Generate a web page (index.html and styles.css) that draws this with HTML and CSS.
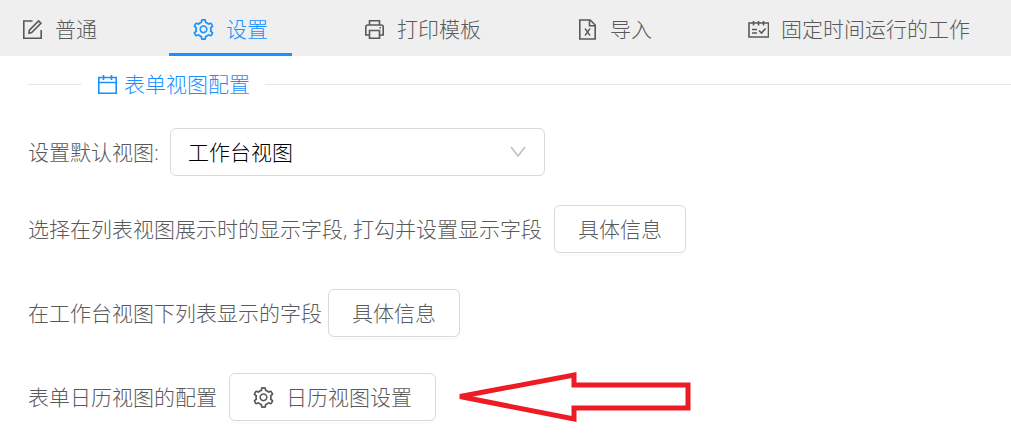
FILE: index.html
```html
<!DOCTYPE html>
<html lang="zh-CN">
<head>
<meta charset="UTF-8">
<meta name="viewport" content="width=device-width, initial-scale=1.0">
<title>设置</title>
<link rel="stylesheet" href="styles.css">
</head>
<body>

<!-- Shared icons -->
<svg class="icon-defs" aria-hidden="true">
    <symbol id="icon-setting" viewBox="64 64 896 896">
        <path fill="currentColor" d="M924.8 625.7l-65.5-56c3.1-19 4.7-38.4 4.7-57.8s-1.6-38.8-4.7-57.8l65.5-56a32.03 32.03 0 0 0 9.3-35.2l-.9-2.6a443.74 443.74 0 0 0-79.7-137.9l-1.8-2.1a32.12 32.12 0 0 0-35.1-9.5l-81.3 28.9c-30-24.6-63.5-44-99.7-57.6l-15.7-85a32.05 32.05 0 0 0-25.8-25.7l-2.7-.5c-52.1-9.4-106.9-9.4-159 0l-2.7.5a32.05 32.05 0 0 0-25.8 25.7l-15.8 85.4a351.86 351.86 0 0 0-99 57.4l-81.9-29.1a32 32 0 0 0-35.1 9.5l-1.8 2.1a446.02 446.02 0 0 0-79.7 137.9l-.9 2.6c-4.5 12.5-.8 26.5 9.3 35.2l66.3 56.6c-3.1 18.8-4.6 38-4.6 57.1 0 19.2 1.5 38.4 4.6 57.1L99 625.5a32.03 32.03 0 0 0-9.3 35.2l.9 2.6c18.1 50.4 44.9 96.9 79.7 137.9l1.8 2.1a32.12 32.12 0 0 0 35.1 9.5l81.9-29.1c29.8 24.5 63.1 43.9 99 57.4l15.8 85.4a32.05 32.05 0 0 0 25.8 25.7l2.7.5a449.4 449.4 0 0 0 159 0l2.7-.5a32.05 32.05 0 0 0 25.8-25.7l15.7-85a350 350 0 0 0 99.7-57.6l81.3 28.9a32 32 0 0 0 35.1-9.5l1.8-2.1c34.8-41.1 61.6-87.5 79.7-137.9l.9-2.6c4.5-12.3.8-26.3-9.3-35zM788.3 465.9c2.5 15.1 3.8 30.6 3.8 46.1s-1.3 31-3.8 46.1l-6.6 40.1 74.7 63.9a370.03 370.03 0 0 1-42.6 73.6L721 702.8l-31.4 25.8c-23.9 19.6-50.5 35-79.3 45.8l-38.1 14.3-17.9 97a377.5 377.5 0 0 1-85 0l-17.9-97.2-37.8-14.5c-28.5-10.8-55-26.2-78.7-45.7l-31.4-25.9-93.4 33.2c-17-22.9-31.2-47.6-42.6-73.6l75.5-64.5-6.5-40c-2.4-14.9-3.7-30.3-3.7-45.5 0-15.3 1.2-30.6 3.7-45.5l6.5-40-75.5-64.5c11.3-26.1 25.6-50.7 42.6-73.6l93.4 33.2 31.4-25.9c23.7-19.5 50.2-34.9 78.7-45.7l37.9-14.3 17.9-97.2c28.1-3.2 56.8-3.2 85 0l17.9 97 38.1 14.3c28.7 10.8 55.4 26.2 79.3 45.8l31.4 25.8 92.8-32.9c17 22.9 31.2 47.6 42.6 73.6L781.8 426l6.5 39.9z"/>
        <path fill="currentColor" d="M512 326c-97.2 0-176 78.8-176 176s78.8 176 176 176 176-78.8 176-176-78.8-176-176-176zm79.2 255.2A111.6 111.6 0 0 1 512 614c-29.9 0-58-11.7-79.2-32.8A111.6 111.6 0 0 1 400 502c0-29.9 11.7-58 32.8-79.2C454 401.6 482.1 390 512 390c29.9 0 58 11.6 79.2 32.8A111.6 111.6 0 0 1 624 502c0 29.9-11.7 58-32.8 79.2z"/>
    </symbol>
</svg>

<!-- Tabs -->
<nav class="tabs">
    <button type="button" class="tab">
        <svg class="icon" viewBox="0 0 21 21"><path d="M10.5 2H1.8v17.2h17.400V11"/><path d="M7 14.200l.4-3L16.600 2l2.300 2.300-9.200 9.300z"/></svg>
        <span>普通</span>
    </button>
    <button type="button" class="tab active">
        <svg class="icon"><use href="#icon-setting"/></svg>
        <span>设置</span>
    </button>
    <button type="button" class="tab">
        <svg class="icon" viewBox="0 0 21 21"><path d="M5.500 6V1.800h10V6M5.500 16H1.800V8q0-2 2-2h13.400q2 0 2 2v8h-3.700M5.500 11.500h10v7.700h-10z"/><path d="M15.500 8.800h1.500"/></svg>
        <span>打印模板</span>
    </button>
    <button type="button" class="tab">
        <svg class="icon" viewBox="0 0 21 21"><path d="M2.800 1h10.400l5 5v14H2.800zM12.500 1v5.800h5.700"/><path class="thin" d="M8 9.500l5 7M13 9.500l-5 7"/></svg>
        <span>导入</span>
    </button>
    <button type="button" class="tab">
        <svg class="icon" viewBox="0 0 21 21"><path d="M1 4h19.500v14H1zM5.500 2v4.500M10.500 2v4.500M15.500 2v4.500M4 10.500h5M4 14h5M11 11.500l2.500 2.500 4-4.500"/></svg>
        <span>固定时间运行的工作</span>
    </button>
</nav>

<main>
    <!-- Section title -->
    <h2 class="divider">
        <svg class="icon" viewBox="0 0 21 21"><path d="M1.800 3.500h17.400v15.700H1.800zM1.800 8.500h17.400M6.500 1v5M14.500 1v5"/></svg>
        <span>表单视图配置</span>
    </h2>

    <!-- Default view -->
    <div class="row row-select">
        <label for="defaultView">设置默认视图:</label>
        <div class="select">
            <select id="defaultView">
                <option>工作台视图</option>
            </select>
            <svg class="chevron" viewBox="0 0 18 18"><path d="M2 4l7 9 7-9"/></svg>
        </div>
    </div>

    <!-- List view fields -->
    <div class="row row-wide">
        <span>选择在列表视图展示时的显示字段, 打勾并设置显示字段</span>
        <button type="button" class="btn">具体信息</button>
    </div>

    <!-- Workbench fields -->
    <div class="row">
        <span>在工作台视图下列表显示的字段</span>
        <button type="button" class="btn">具体信息</button>
    </div>

    <!-- Calendar view -->
    <div class="row row-wide">
        <span>表单日历视图的配置</span>
        <button type="button" class="btn">
            <svg class="icon"><use href="#icon-setting"/></svg>
            <span>日历视图设置</span>
        </button>
        <svg class="arrow" viewBox="0 0 234 52" aria-hidden="true"><path d="M3 25.500L117 4v10h114v23H117v11z"/></svg>
    </div>
</main>

</body>
</html>
```
FILE: styles.css
```css
body {
    margin: 0;
    background-color: #fff;
    color: #595959;
    font-family: "Open Sans", "Noto Sans CJK SC", sans-serif;
    font-size: 21px;
    font-weight: 300;
    line-height: 32px;
}
button,
select {
    font: inherit;
    color: inherit;
    cursor: pointer;
}

/* ICONS */
.icon-defs {
    display: none;
}
.icon {
    width: 21px;
    height: 21px;
    flex: none;
    fill: none;
    stroke: currentColor;
    stroke-width: 1.6;
}
.icon use {
    stroke: none;
}
.icon .thin {
    stroke-width: 1.3;
}

/* TABS */
.tabs {
    display: flex;
    gap: 48px;
    height: 56px;
    padding-left: 22px;
    background-color: #efefef;
}
.tab {
    display: flex;
    align-items: center;
    gap: 12px;
    padding: 5px 24px 0;
    border: none;
    border-bottom: 3px solid transparent;
    background: none;
    white-space: nowrap;
}
.tab:first-child {
    padding-left: 0;
}
.tab.active {
    color: #1890ff;
    border-bottom-color: #1890ff;
}

/* SECTION TITLE */
.divider {
    display: flex;
    align-items: center;
    height: 56px;
    margin: 0;
    color: #1890ff;
    font-size: 21px;
    font-weight: 300;
}
.divider::before,
.divider::after {
    content: "";
    height: 1px;
    background-color: #e8e8e8;
}
.divider::before {
    width: 54px;
    margin-right: 15px;
}
.divider::after {
    flex: 1;
    margin-left: 15px;
}
.divider .icon {
    margin-right: 6px;
}

/* ROWS */
main {
    padding: 0 0 16px 28px;
}
.row {
    display: flex;
    align-items: center;
    gap: 6px;
    height: 48px;
    margin-bottom: 36px;
    white-space: nowrap;
}
.row-wide {
    gap: 12px;
}
.row-select {
    gap: 11px;
    margin-top: 16px;
    margin-bottom: 29px;
}
.row:last-child {
    margin-bottom: 0;
}

/* SELECT */
.select {
    position: relative;
    width: 375px;
}
.select select {
    appearance: none;
    box-sizing: border-box;
    display: block;
    width: 100%;
    height: 48px;
    padding: 0 48px 0 17px;
    border: 1px solid #d9d9d9;
    border-radius: 6px;
    background-color: #fff;
    color: #000;
}
.chevron {
    position: absolute;
    top: 15px;
    right: 18px;
    width: 18px;
    height: 18px;
    fill: none;
    stroke: #bfbfbf;
    stroke-width: 1.5;
    pointer-events: none;
}

/* BUTTONS */
.btn {
    display: flex;
    align-items: center;
    gap: 12px;
    box-sizing: border-box;
    height: 48px;
    padding: 0 23px;
    border: 1px solid #d9d9d9;
    border-radius: 6px;
    background-color: #fff;
    box-shadow: 0 3px 0 rgba(0, 0, 0, 0.015);
}

/* ARROW */
.arrow {
    width: 234px;
    height: 52px;
    margin-left: 9px;
    fill: none;
    stroke: #ed1c24;
    stroke-width: 5;
    stroke-linejoin: miter;
}
```
